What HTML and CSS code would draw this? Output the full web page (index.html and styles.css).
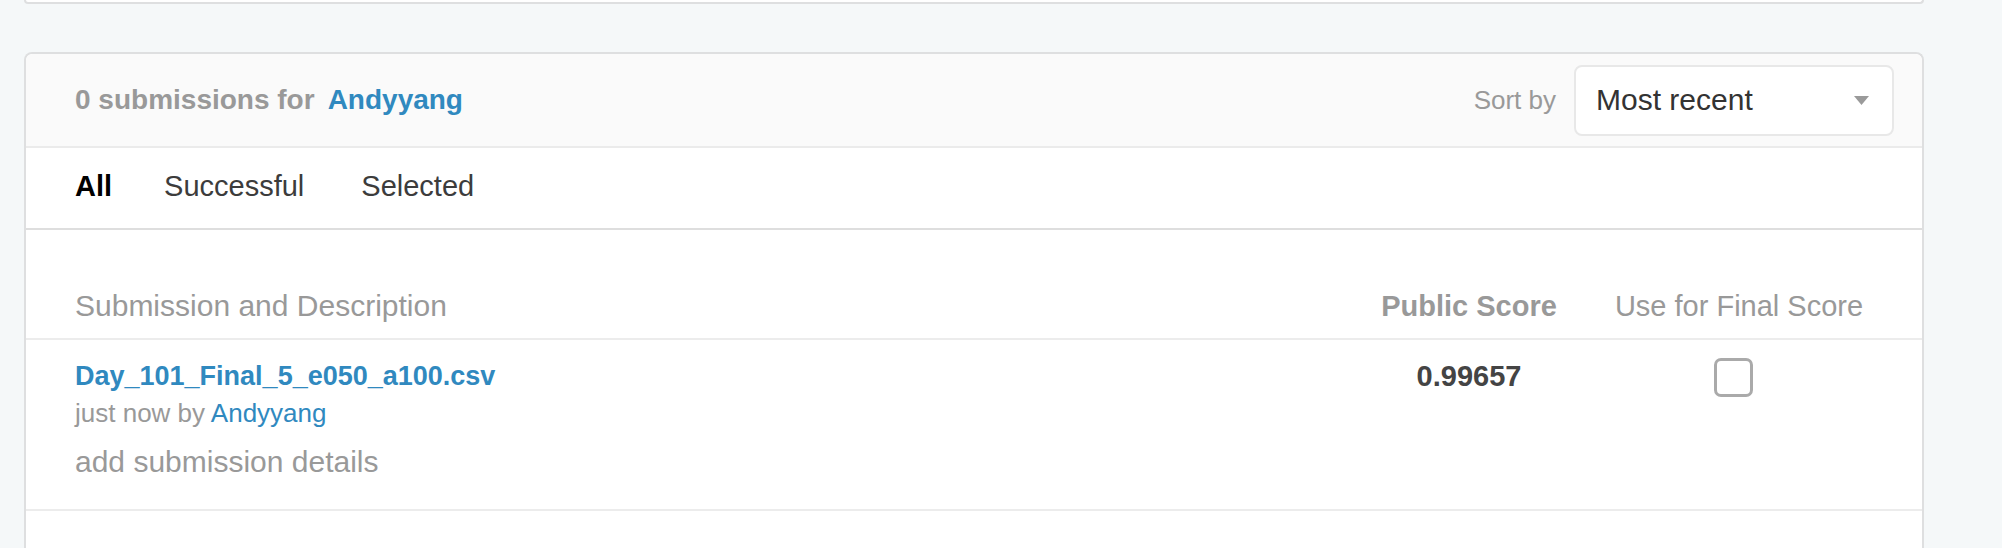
FILE: index.html
```html
<!DOCTYPE html>
<html>
<head>
<meta charset="utf-8">
<link rel="stylesheet" href="styles.css">
</head>
<body>
<div class="page">
  <div class="prev-card"></div>
  <div class="card">
    <div class="card-header">
      <div class="title"><span class="muted">0 submissions for</span><a class="link user" href="#">Andyyang</a></div>
      <div class="sort">
        <span class="sort-label">Sort by</span>
        <div class="select">
          <span class="select-value">Most recent</span>
          <svg class="caret" width="15" height="9" viewBox="0 0 15 9"><path d="M0 0H15L7.5 9Z" fill="#9a9a9a"/></svg>
        </div>
      </div>
    </div>
    <div class="tabs">
      <span class="tab active">All</span>
      <span class="tab">Successful</span>
      <span class="tab">Selected</span>
    </div>
    <div class="table">
      <div class="row head">
        <div class="col-desc">Submission and Description</div>
        <div class="col-score strong">Public Score</div>
        <div class="col-use">Use for Final Score</div>
      </div>
      <div class="row item">
        <div class="col-desc">
          <a class="link file" href="#">Day_101_Final_5_e050_a100.csv</a>
          <div class="meta">just now by <a class="link" href="#">Andyyang</a></div>
          <div class="details">add submission details</div>
        </div>
        <div class="col-score score">0.99657</div>
        <div class="col-use"><span class="checkbox"></span></div>
      </div>
    </div>
  </div>
</div>
</body>
</html>
```
FILE: styles.css
```css
html, body {
  margin: 0;
  padding: 0;
  background: #f5f8f9;
  font-family: "Liberation Sans", Arial, sans-serif;
}
.page {
  padding-left: 24px;
  width: 1900px;
}
.prev-card {
  height: 2px;
  background: #fff;
  border: 2px solid #dedfe0;
  border-top: none;
  border-radius: 0 0 8px 8px;
}
.card {
  box-sizing: border-box;
  margin-top: 48px;
  background: #fff;
  border: 2px solid #dedfe0;
  border-bottom: none;
  border-radius: 8px 8px 0 0;
  height: 496px;
  overflow: hidden;
}
.card-header {
  height: 92px;
  background: #fafafa;
  border-bottom: 2px solid #ebebeb;
  border-radius: 6px 6px 0 0;
  display: flex;
  align-items: center;
  justify-content: space-between;
  padding: 0 28px 0 49px;
}
.title {
  font-size: 28px;
  line-height: 32px;
  font-weight: bold;
}
.muted { color: #999; }
.link {
  color: #3089bf;
  text-decoration: none;
}
.user { margin-left: 13px; }
.sort {
  display: flex;
  align-items: center;
  gap: 18px;
}
.sort-label {
  font-size: 26px;
  color: #999;
  line-height: 32px;
}
.select {
  box-sizing: border-box;
  width: 320px;
  height: 71px;
  background: #fff;
  border: 2px solid #e8e8e8;
  border-radius: 8px;
  display: flex;
  align-items: center;
  justify-content: space-between;
  padding: 0 23px 0 20px;
}
.select-value {
  font-size: 30px;
  color: #333;
  line-height: 32px;
}
.caret { display: block; }
.tabs {
  height: 76px;
  padding-bottom: 4px;
  border-bottom: 2px solid #dedede;
  display: flex;
  align-items: center;
  padding-left: 49px;
  gap: 52px;
}
.tab {
  font-size: 29px;
  line-height: 34px;
  color: #3c3c3c;
}
.tab:last-child { margin-left: 5px; }
.tab.active {
  font-weight: bold;
  color: #000;
}
.row {
  display: grid;
  grid-template-columns: 1fr 180px 252px;
  column-gap: 54px;
  padding: 0 57px 0 49px;
  border-bottom: 2px solid #ececec;
  white-space: nowrap;
}
.head {
  padding-top: 59px;
  padding-bottom: 15px;
  font-size: 29px;
  line-height: 34px;
  color: #999;
}
.head .col-desc { font-size: 30px; }
.col-score, .col-use { text-align: center; }
.strong { font-weight: bold; }
.item {
  padding-top: 20px;
  padding-bottom: 30px;
  align-items: start;
}
.file {
  display: block;
  font-size: 27px;
  line-height: 32px;
  font-weight: bold;
}
.meta {
  margin-top: 6px;
  font-size: 26px;
  line-height: 30px;
  color: #999;
}
.details {
  margin-top: 17px;
  font-size: 30px;
  line-height: 34px;
  color: #999;
}
.score {
  font-size: 29px;
  line-height: 32px;
  font-weight: bold;
  color: #444;
}
.checkbox {
  display: inline-block;
  box-sizing: border-box;
  width: 39px;
  height: 39px;
  margin-top: -2px;
  margin-right: 12px;
  border: 3px solid #aaa;
  border-radius: 7px;
  background: #fff;
}
```
